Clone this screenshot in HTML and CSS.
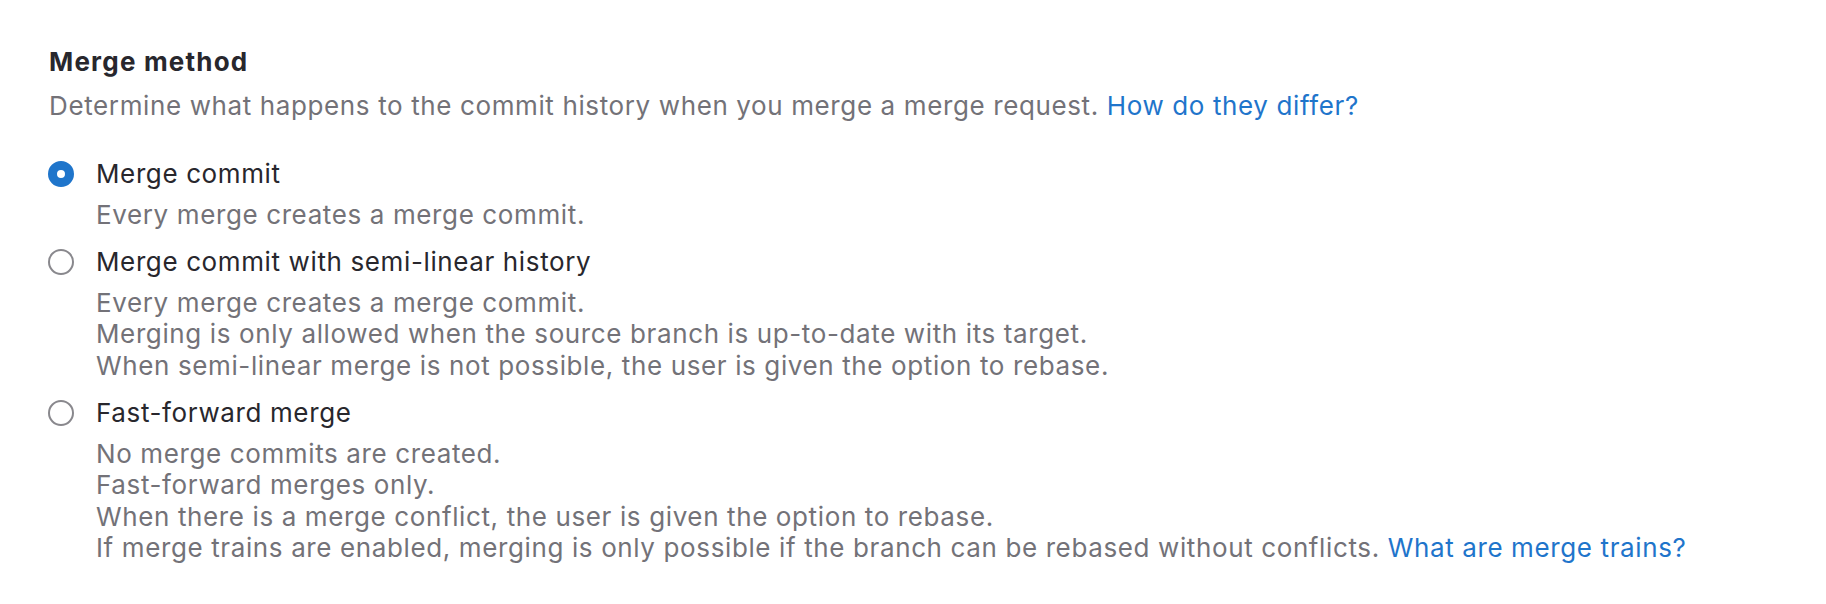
FILE: index.html
```html
<!DOCTYPE html>
<html lang="en">
<head>
<meta charset="utf-8">
<title>Merge method</title>
<link rel="stylesheet" href="styles.css">
</head>
<body>
<section class="setting">
  <h4 class="setting-title">Merge method</h4>
  <p class="setting-desc">Determine what happens to the commit history when you merge a merge request. <a class="link" href="#">How do they differ?</a></p>
  <div class="radio-group">
    <label class="radio-item">
      <span class="radio radio-checked"></span>
      <span class="radio-content">
        <span class="radio-label">Merge commit</span>
        <span class="radio-help">Every merge creates a merge commit.</span>
      </span>
    </label>
    <label class="radio-item">
      <span class="radio"></span>
      <span class="radio-content">
        <span class="radio-label">Merge commit with semi-linear history</span>
        <span class="radio-help">Every merge creates a merge commit.<br>Merging is only allowed when the source branch is up-to-date with its target.<br>When semi-linear merge is not possible, the user is given the option to rebase.</span>
      </span>
    </label>
    <label class="radio-item">
      <span class="radio"></span>
      <span class="radio-content">
        <span class="radio-label">Fast-forward merge</span>
        <span class="radio-help">No merge commits are created.<br>Fast-forward merges only.<br>When there is a merge conflict, the user is given the option to rebase.<br>If merge trains are enabled, merging is only possible if the branch can be rebased without conflicts. <a class="link" href="#">What are merge trains?</a></span>
      </span>
    </label>
  </div>
</section>
</body>
</html>
```
FILE: styles.css
```css
html, body {
  margin: 0;
  padding: 0;
  background: #ffffff;
}

body {
  font-family: Inter, "Noto Sans", "Liberation Sans", sans-serif;
  font-size: 26px;
  line-height: 31.5px;
  letter-spacing: 0.62px;
  color: #28272d;
}

.setting {
  padding: 46px 0 0 49px;
}

.setting-title {
  margin: 0 0 12px;
  font-size: 26px;
  line-height: 31.5px;
  font-weight: 700;
  letter-spacing: 1.2px;
  color: #28272d;
}

.setting-desc {
  margin: 0 0 37px;
  color: #737278;
}

.link {
  color: #1f75cb;
  text-decoration: none;
}

.radio-group {
  display: flex;
  flex-direction: column;
  gap: 16px;
}

.radio-item {
  display: flex;
  align-items: flex-start;
  gap: 22px;
  margin-left: -1px;
}

.radio {
  flex: none;
  box-sizing: border-box;
  width: 26px;
  height: 26px;
  margin-top: 3px;
  border-radius: 50%;
  border: 2px solid #89888d;
  background: #ffffff;
}

.radio-checked {
  border: 9px solid #1f75cb;
  background: #ffffff;
}

.radio-content {
  display: flex;
  flex-direction: column;
  gap: 9px;
}

.radio-label {
  color: #28272d;
}

.radio-help {
  color: #737278;
}
```
